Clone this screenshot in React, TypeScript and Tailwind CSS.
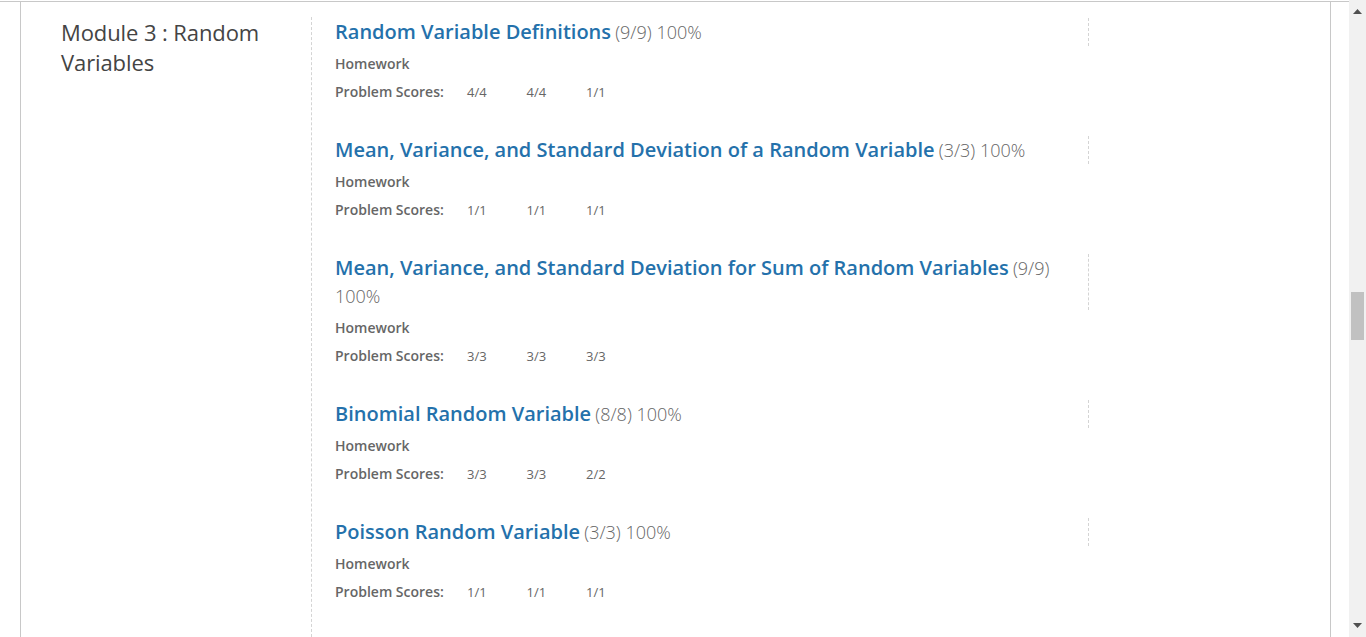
import React from 'react';

interface Item {
  title: string;
  score: string;
  percent: string;
  scores: string[];
}

const items: Item[] = [
  { title: 'Random Variable Definitions', score: '(9/9)', percent: '100%', scores: ['4/4', '4/4', '1/1'] },
  { title: 'Mean, Variance, and Standard Deviation of a Random Variable', score: '(3/3)', percent: '100%', scores: ['1/1', '1/1', '1/1'] },
  { title: 'Mean, Variance, and Standard Deviation for Sum of Random Variables', score: '(9/9)', percent: '100%', scores: ['3/3', '3/3', '3/3'] },
  { title: 'Binomial Random Variable', score: '(8/8)', percent: '100%', scores: ['3/3', '3/3', '2/2'] },
  { title: 'Poisson Random Variable', score: '(3/3)', percent: '100%', scores: ['1/1', '1/1', '1/1'] },
];

export default function App() {
  return (
    <div
      className="w-[1366px] h-[637px] flex overflow-hidden bg-white"
      style={{ fontFamily: '"Open Sans", "Liberation Sans", sans-serif' }}
    >
      {/* Page */}
      <div className="flex-1 flex flex-col pt-px">
        <div className="flex-1 border-t border-[#c8c8c8] flex pl-5 pr-[18px]">
          <div className="flex-1 flex border-x border-[#c8c8c8]">
            {/* Module title */}
            <div className="w-[290px] pl-10 pt-[15px]">
              <h2 className="text-[22px] leading-[30px] text-[#444] font-normal tracking-[-0.1px]">Module 3 : Random Variables</h2>
            </div>

            {/* Assignments */}
            <div className="flex-1 border-l border-dashed border-[#d4d4d4] mt-[15px] pl-[23px] pt-px">
              {items.map((item, i) => (
                <div key={i} className="mb-[34px]">
                  <div className="w-[754px] pr-[36px] border-r border-dashed border-[#d4d4d4]">
                    <span className="text-[20px] leading-[28px] font-semibold text-[#2471ab]">{item.title}</span>{' '}
                    <span className="text-[18px] leading-[28px] font-light text-[#666]">
                      {item.score} {item.percent}
                    </span>
                  </div>
                  <p className="mt-2 text-[14px] leading-5 font-semibold text-[#666]">Homework</p>
                  <div className="mt-2 flex items-center text-[#666] leading-5">
                    <span className="text-[14px] font-semibold w-[132px]">Problem Scores:</span>
                    {item.scores.map((s, j) => (
                      <span key={j} className="text-[13px] w-[59.5px] text-[#666]">{s}</span>
                    ))}
                  </div>
                </div>
              ))}
            </div>
          </div>
        </div>
      </div>

      {/* Scrollbar */}
      <div className="w-[17px] bg-[#f1f1f1] flex flex-col items-center justify-between py-[9px] relative">
        <svg width="9" height="5" viewBox="0 0 9 5"><path d="M0 5 L4.5 0 L9 5 Z" fill="#505050" /></svg>
        <div className="absolute left-[2px] top-[292px] w-[13px] h-[48px] bg-[#c1c1c1]" />
        <svg width="9" height="5" viewBox="0 0 9 5"><path d="M0 0 L4.5 5 L9 0 Z" fill="#505050" /></svg>
      </div>
    </div>
  );
}
